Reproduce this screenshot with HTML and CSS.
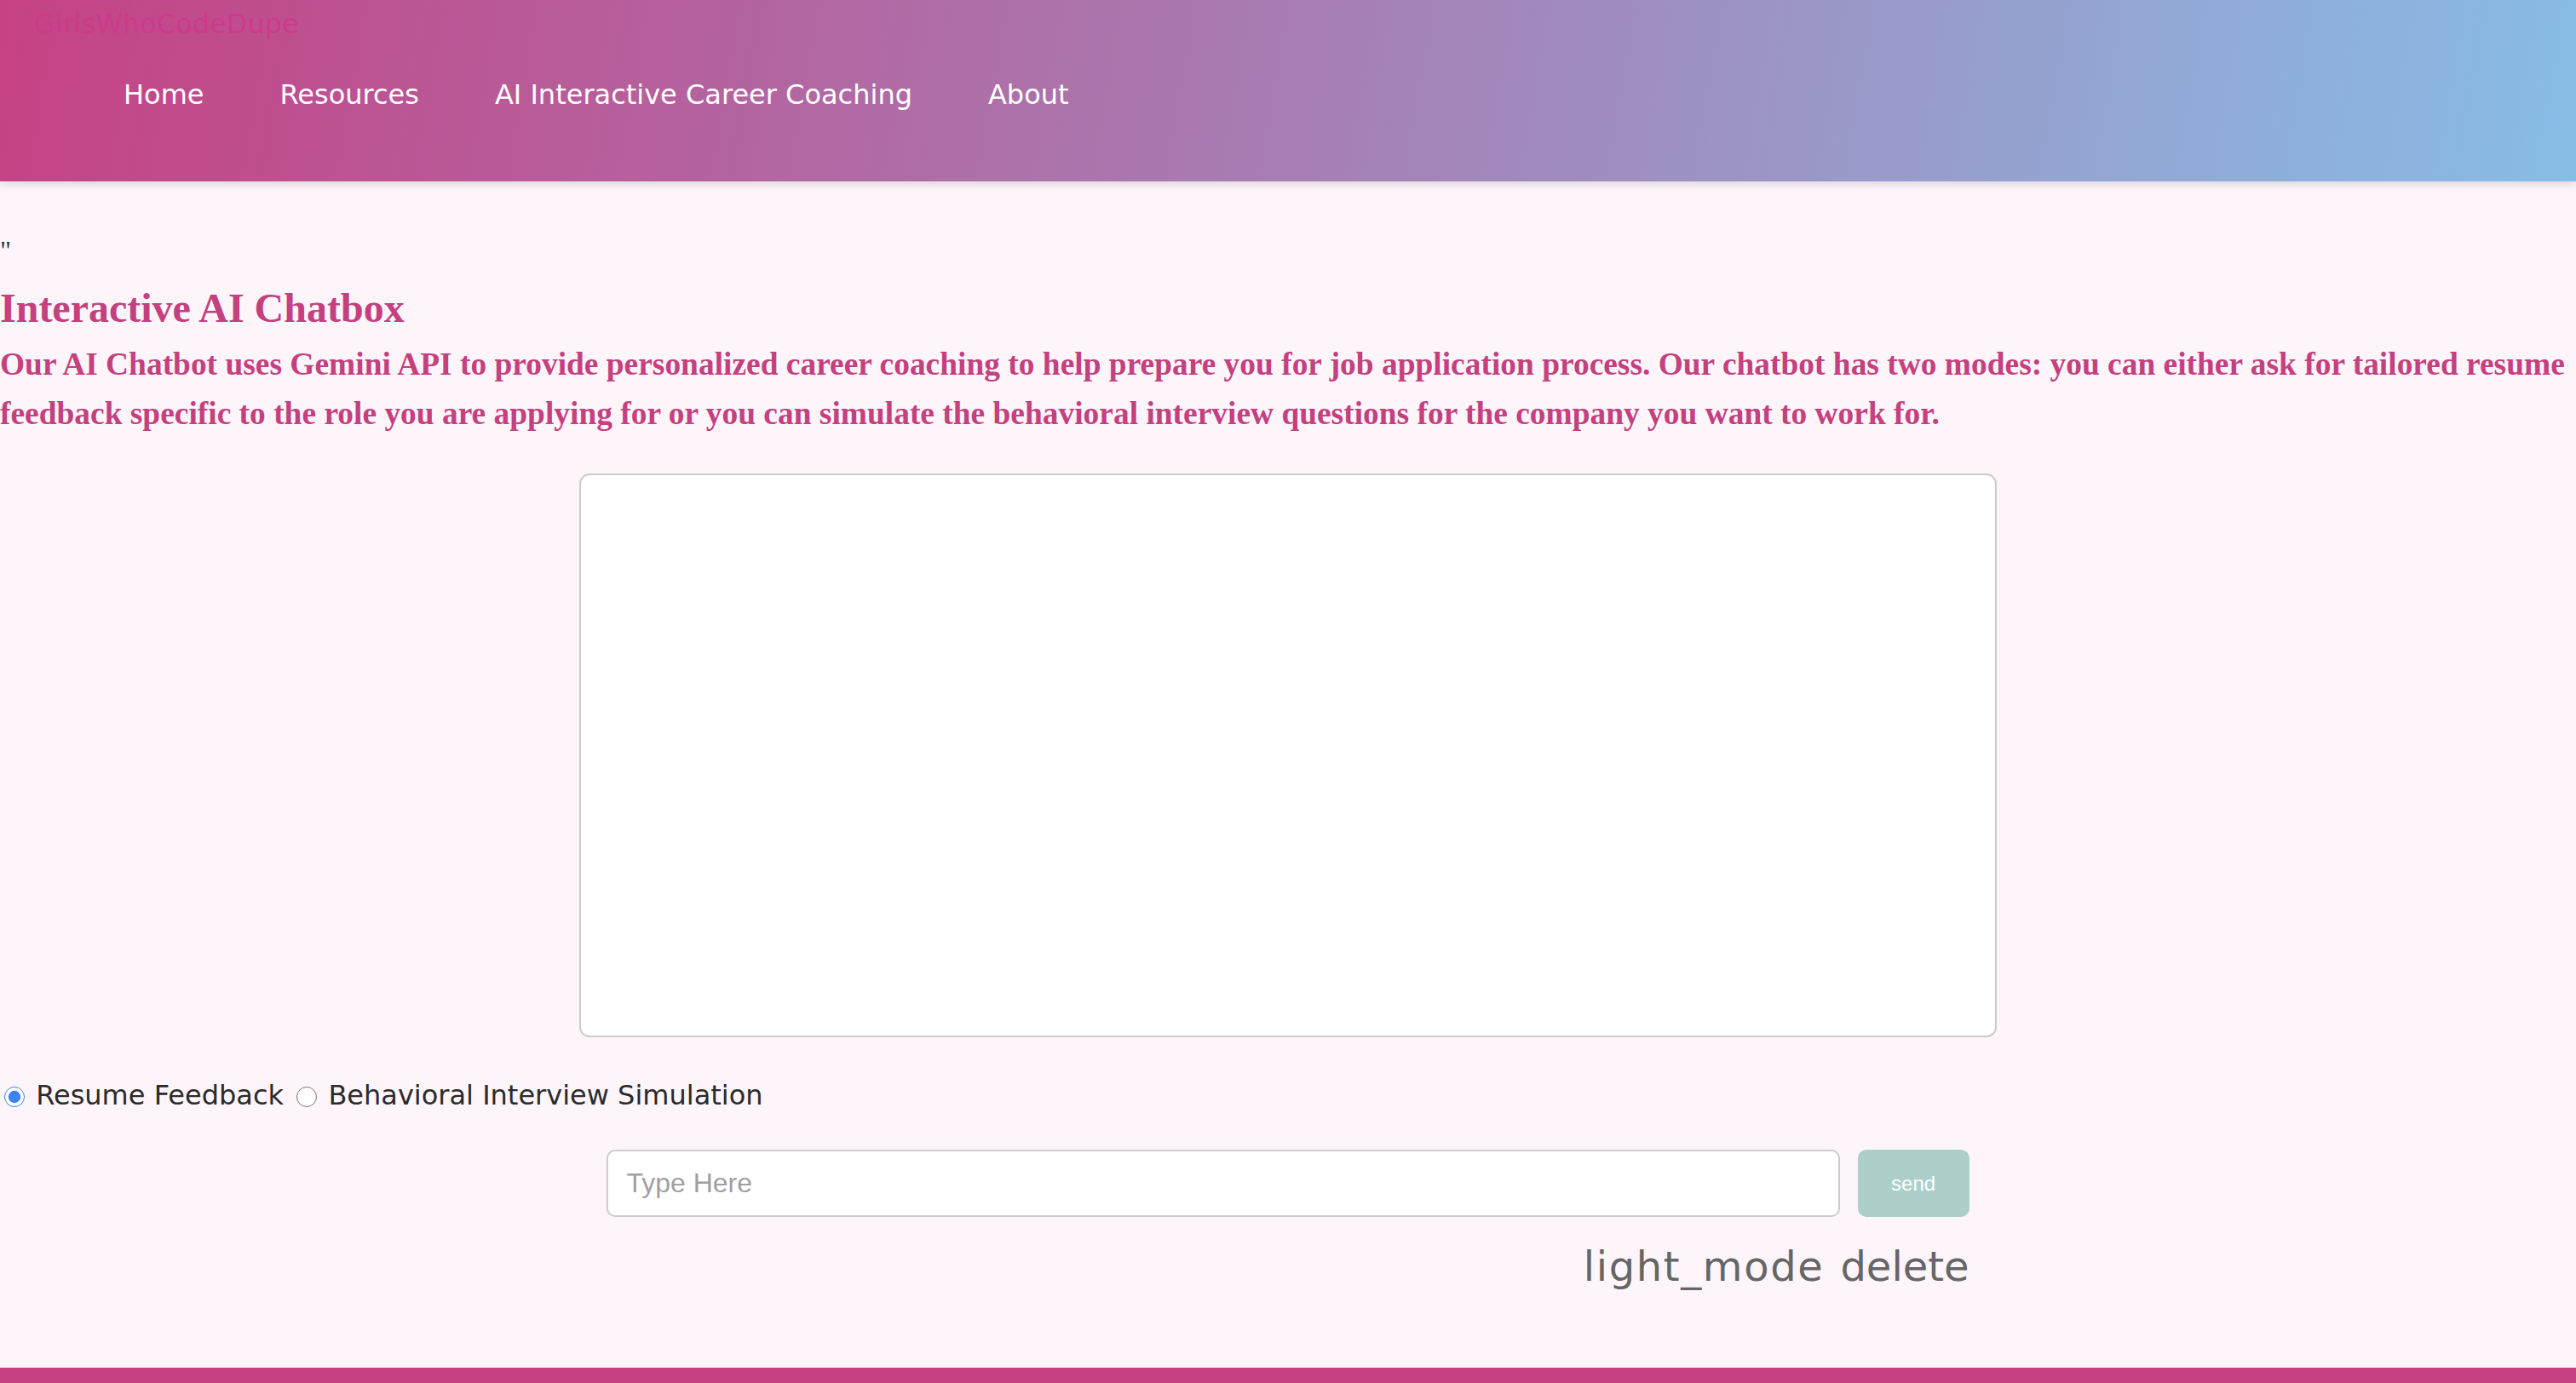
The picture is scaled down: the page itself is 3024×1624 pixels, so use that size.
FILE: index.html
```html
<!DOCTYPE html>
<html lang="en">
<head>
    <meta charset="UTF-8">
    <meta name="viewport" content="width=device-width, initial-scale=1.0">
    <title>AI Interactive Career Coaching</title>
    <link rel="stylesheet" href="styles.css">
</head>
<body>
    <header class="site-header">
        <div class="logo">GirlsWhoCodeDupe</div>
        <nav>
            <ul class="nav-links">
                <li><a href="#">Home</a></li>
                <li><a href="#">Resources</a></li>
                <li><a href="#">AI Interactive Career Coaching</a></li>
                <li><a href="#">About</a></li>
            </ul>
        </nav>
    </header>

    <main class="page">
        <div class="stray">"</div>
        <h2 class="title">Interactive AI Chatbox</h2>
        <h3 class="intro">Our AI Chatbot uses Gemini API to provide personalized career coaching to help prepare you for job application process. Our chatbot has two modes: you can either ask for tailored resume feedback specific to the role you are applying for or you can simulate the behavioral interview questions for the company you want to work for.</h3>

        <!-- chat messages go here -->
        <div class="chat-container"></div>

        <div class="modes">
            <input type="radio" name="mode" id="resume" checked> <label for="resume">Resume Feedback</label>
            <input type="radio" name="mode" id="behavioral"> <label for="behavioral">Behavioral Interview Simulation</label>
        </div>

        <div class="typing-area">
            <div class="typing-form">
                <input type="text" class="typing-input" placeholder="Type Here">
                <button class="send-button">send</button>
            </div>
            <div class="action-icons">
                <span class="icon wide">light_mode</span>
                <span class="icon">delete</span>
            </div>
        </div>
    </main>

    <footer class="site-footer"></footer>
</body>
</html>
```

FILE: styles.css
```css
html, body {
    margin: 0;
    padding: 0;
}

body {
    min-height: 100vh;
    display: flex;
    flex-direction: column;
    background: #fdf5fa;
    font-family: "DejaVu Sans", sans-serif;
}

/* header */
.site-header {
    height: 213px;
    box-sizing: border-box;
    padding-top: 10px;
    background: linear-gradient(100deg, #c54285 0%, #a77db3 50%, #87bde6 100%);
    box-shadow: 0 4px 10px rgba(0, 0, 0, 0.12);
}

.logo {
    margin-left: 40px;
    font-size: 32px;
    line-height: 37px;
    color: #cc3a8a;
}

.nav-links {
    list-style: none;
    display: flex;
    gap: 89px;
    margin: 46px 0 0 0;
    padding: 0 0 0 145px;
}

.nav-links a {
    color: #fff;
    text-decoration: none;
    font-size: 32px;
    line-height: 37px;
}

/* intro */
.page {
    display: flex;
    flex-direction: column;
}

.stray {
    margin-top: 63px;
    font-family: "Liberation Serif", serif;
    font-size: 32px;
    color: #333;
}

.title {
    margin: 21px 0 0 0;
    font-family: "Liberation Serif", serif;
    font-size: 48px;
    font-weight: bold;
    color: #c4407f;
}

.intro {
    margin: 10px 0 0 0;
    font-family: "Liberation Serif", serif;
    font-size: 37.44px;
    line-height: 58px;
    font-weight: bold;
    color: #c4407f;
}

/* chat */
.chat-container {
    width: 55%;
    height: 662px;
    box-sizing: border-box;
    margin: 41px auto 0 auto;
    background: #fff;
    border: 2px solid #cccccc;
    border-radius: 12px;
}

.modes {
    margin-top: 44px;
    font-size: 32px;
    line-height: 48px;
    color: #2b2b2b;
}

.modes input {
    width: 24px;
    height: 24px;
    margin: 3px 3px 0 5px;
    vertical-align: -3px;
    accent-color: #3b82f6;
}

.typing-area {
    width: 55%;
    box-sizing: border-box;
    margin: 40px auto 0 auto;
    padding: 0 32px;
}

.typing-form {
    display: flex;
    gap: 21px;
}

.typing-input {
    flex: 1;
    height: 79px;
    box-sizing: border-box;
    padding: 0 21px;
    border: 2px solid #cccccc;
    border-radius: 10px;
    background: #fff;
    font-family: "Liberation Sans", sans-serif;
    font-size: 32px;
    outline: none;
}

.typing-input::placeholder {
    color: #a0a0a0;
}

.send-button {
    width: 131px;
    height: 79px;
    border: none;
    border-radius: 10px;
    background: #accfc9;
    color: #fff;
    font-family: "Liberation Sans", sans-serif;
    font-size: 24px;
    cursor: pointer;
}

.action-icons {
    display: flex;
    justify-content: flex-end;
    gap: 19px;
    margin-top: 30px;
    font-size: 48px;
    color: #666;
}

.action-icons .wide {
    letter-spacing: 1.6px;
}

.site-footer {
    margin-top: auto;
    height: 18px;
    background: #c5417f;
}
```
